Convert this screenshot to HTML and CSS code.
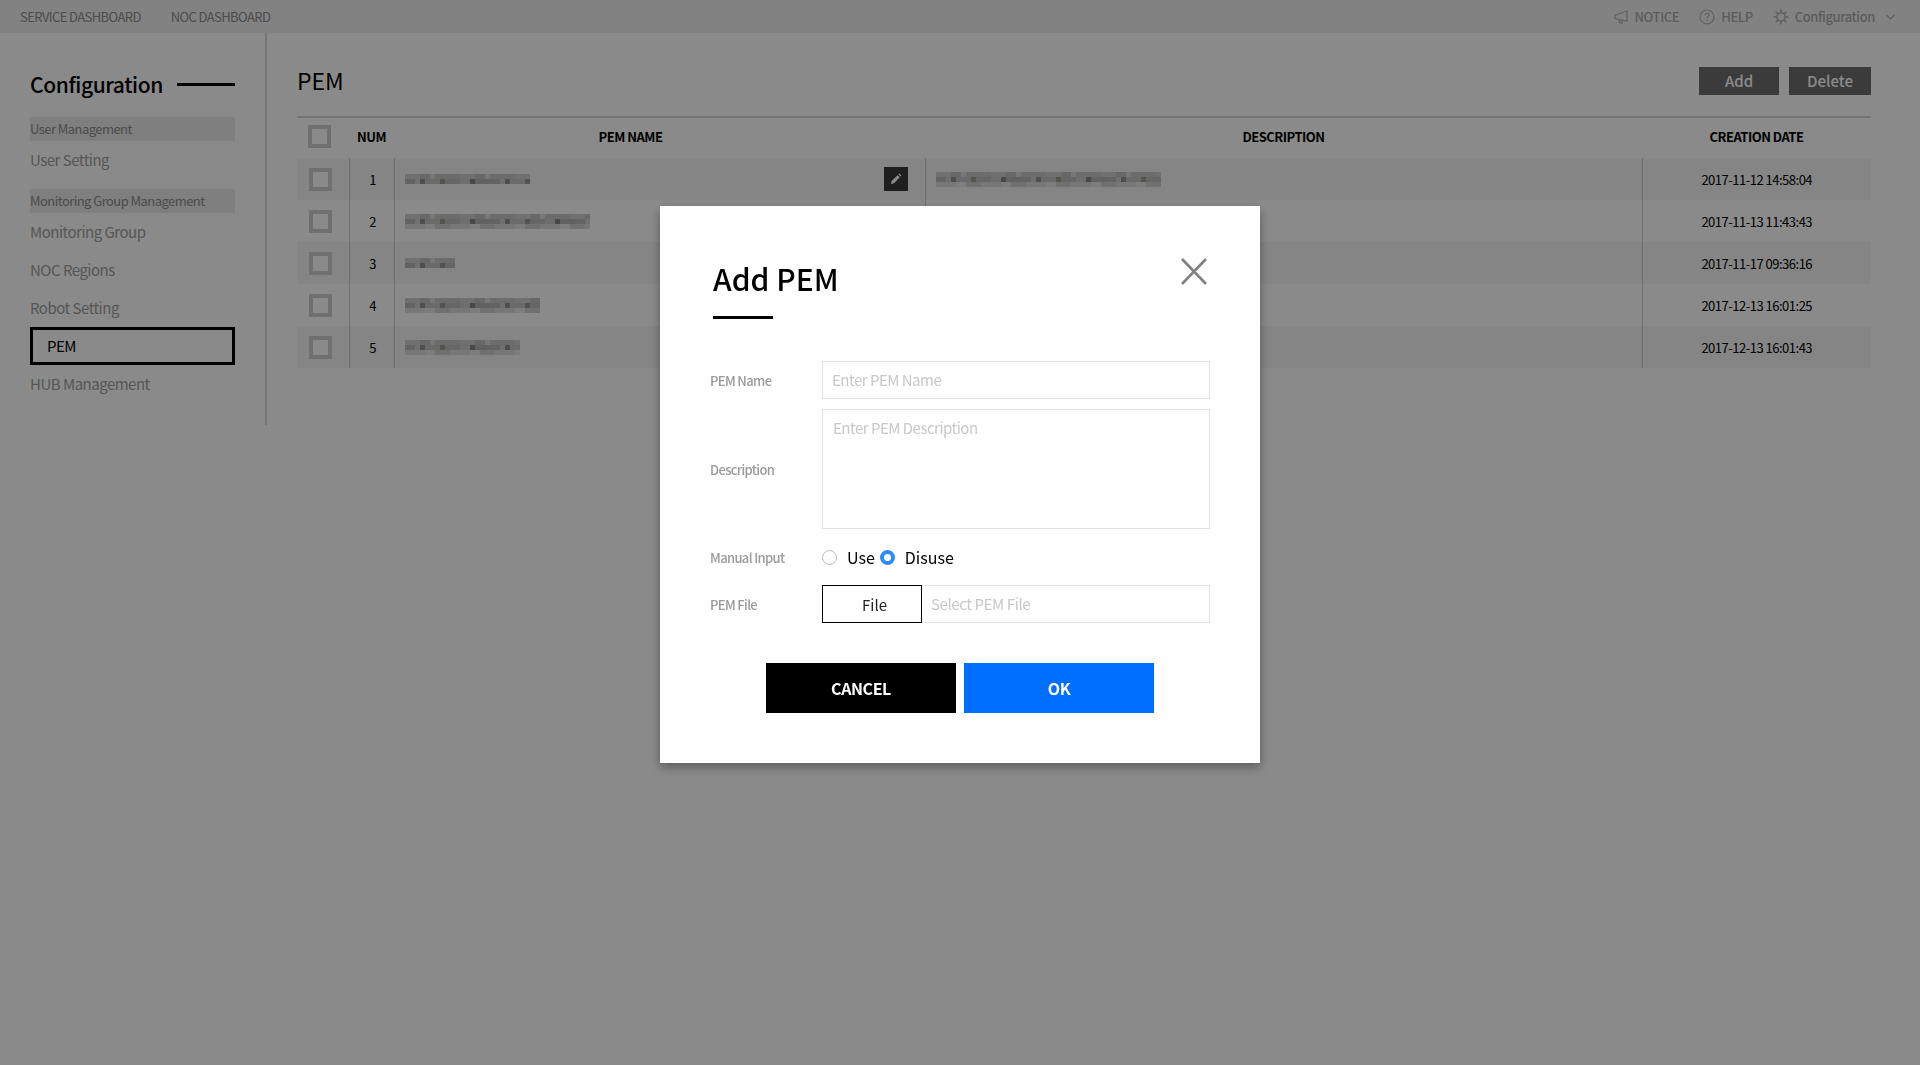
FILE: index.html
```html
<!DOCTYPE html>
<html lang="en">
<head>
    <meta charset="UTF-8">
    <title>PEM</title>
    <link rel="stylesheet" href="styles.css">
</head>
<body>
<div id="topbar">
    <div class="top-left">
        <a>SERVICE DASHBOARD</a>
        <a>NOC DASHBOARD</a>
    </div>
    <div class="top-right">
        <a class="notice">
            <svg width="14" height="14" viewBox="0 0 14 14" fill="none" stroke="#b0b0b0" stroke-width="1.2"><path d="M13 1 L13 11 L5 9.5 L1 8.5 L1 5.5 L5 3.8 Z M5 9.5 L5.6 13 L8.2 13 L7.8 10"/></svg>
            NOTICE
        </a>
        <a class="help">
            <svg width="16" height="16" viewBox="0 0 16 16" fill="none" stroke="#b0b0b0" stroke-width="1.1"><circle cx="8" cy="8" r="7"/><path d="M5.9 6.2 C6 4.8 7 4.2 8 4.2 C9.3 4.2 10.1 5 10.1 6 C10.1 7.4 8 7.5 8 9.4"/><path d="M8 10.6 L8 12"/></svg>
            HELP
        </a>
        <a class="conf">
            <svg width="16" height="16" viewBox="0 0 16 16" fill="none" stroke="#b0b0b0" stroke-width="1.5"><circle cx="8" cy="8" r="4.2"/><path d="M8 .5V4M8 12v3.5M.5 8H4M12 8h3.5M2.7 2.7l2.5 2.5M10.8 10.8l2.5 2.5M13.3 2.7l-2.5 2.5M5.2 10.8l-2.5 2.5"/></svg>
            Configuration
            <svg class="chev" width="9" height="6" viewBox="0 0 9 6" fill="none" stroke="#b0b0b0" stroke-width="1.2"><path d="M.5 1 L4.5 5 L8.5 1"/></svg>
        </a>
    </div>
</div>
<div id="wrap">
    <div id="side">
        <div class="side-title"><h2>Configuration</h2><i></i></div>
        <div class="side-group">User Management</div>
        <a class="side-item">User Setting</a>
        <div class="side-group second">Monitoring Group Management</div>
        <a class="side-item">Monitoring Group</a>
        <a class="side-item">NOC Regions</a>
        <a class="side-item">Robot Setting</a>
        <a class="side-item on">PEM</a>
        <a class="side-item">HUB Management</a>
    </div>
    <div id="main">
        <div class="main-head">
            <h1>PEM</h1>
            <div class="btns">
                <button class="btn-add">Add</button>
                <button class="btn-del">Delete</button>
            </div>
        </div>
        <table>
            <colgroup>
                <col class="c-check"><col class="c-num"><col class="c-name"><col class="c-desc"><col class="c-date">
            </colgroup>
            <thead>
                <tr>
                    <th><span class="check head"></span></th>
                    <th>NUM</th>
                    <th class="th-name">PEM NAME</th>
                    <th>DESCRIPTION</th>
                    <th>CREATION DATE</th>
                </tr>
            </thead>
            <tbody>
                <tr>
                    <td><span class="check"></span></td>
                    <td>1</td>
                    <td><div class="name-cell"><span class="mosaic m1"></span><span class="edit"><svg width="12" height="12" viewBox="0 0 12 12" fill="#fff"><path d="M1 11 L1.6 8 L7.6 2.2 L9.8 4.3 L4 10.2 Z M8.4 1.4 L9.4 .5 L11.5 2.6 L10.6 3.5 Z"/></svg></span></div></td>
                    <td><span class="mosaic d1"></span></td>
                    <td class="date">2017-11-12 14:58:04</td>
                </tr>
                <tr>
                    <td><span class="check"></span></td>
                    <td>2</td>
                    <td><span class="mosaic m2"></span></td>
                    <td></td>
                    <td class="date">2017-11-13 11:43:43</td>
                </tr>
                <tr>
                    <td><span class="check"></span></td>
                    <td>3</td>
                    <td><span class="mosaic m3"></span></td>
                    <td></td>
                    <td class="date">2017-11-17 09:36:16</td>
                </tr>
                <tr>
                    <td><span class="check"></span></td>
                    <td>4</td>
                    <td><span class="mosaic m4"></span></td>
                    <td></td>
                    <td class="date">2017-12-13 16:01:25</td>
                </tr>
                <tr>
                    <td><span class="check"></span></td>
                    <td>5</td>
                    <td><span class="mosaic m5"></span></td>
                    <td></td>
                    <td class="date">2017-12-13 16:01:43</td>
                </tr>
            </tbody>
        </table>
    </div>
</div>

<div id="overlay">
    <div id="modal">
        <a class="close">
            <svg width="26" height="27" viewBox="0 0 26 27" fill="none" stroke="#808080" stroke-width="2.6"><path d="M1 1 L25 26 M25 1 L1 26"/></svg>
        </a>
        <h3>Add PEM</h3>
        <div class="title-line"></div>
        <div class="form">
            <label>PEM Name</label>
            <input type="text" placeholder="Enter PEM Name">
            <label>Description</label>
            <textarea placeholder="Enter PEM Description"></textarea>
            <label>Manual Input</label>
            <div class="radios">
                <input type="radio" name="manual" id="use"><label for="use">Use</label>
                <input type="radio" name="manual" id="disuse" checked><label for="disuse">Disuse</label>
            </div>
            <label>PEM File</label>
            <div class="file-row">
                <button class="file-btn">File</button>
                <input type="text" placeholder="Select PEM File">
            </div>
        </div>
        <div class="actions">
            <button class="cancel">CANCEL</button>
            <button class="ok">OK</button>
        </div>
    </div>
</div>
</body>
</html>
```

FILE: styles.css
```css
*{
    margin:0;
    padding:0;
    box-sizing:border-box;
}
html,body{
    height:100%;
}
body{
    background:#fff;
    font-family:"Noto Sans CJK KR","Noto Sans",sans-serif;
    color:#000;
    overflow:hidden;
}
button,input,textarea{
    font-family:inherit;
}
#topbar{
    height:33px;
    background:#f1f1f1;
    display:flex;
    justify-content:space-between;
    align-items:center;
    padding:0 25px 0 20px;
    font-size:13px;
    letter-spacing:-.6px;
    color:#8c8c8c;
}
.top-left{
    display:flex;
    gap:30px;
}
.top-right{
    display:flex;
    align-items:center;
    color:#a8a8a8;
    letter-spacing:-.4px;
}
.top-right a{
    display:flex;
    align-items:center;
    gap:6px;
    font-weight:500;
}
.help{
    margin-left:20px;
}
.conf{
    margin-left:20px;
}
.chev{
    margin-left:5px;
}
#wrap{
    display:flex;
}
#side{
    width:268px;
    height:392px;
    padding:0 30px 0 30px;
    border-right:2px solid #d9d9d9;
}
.side-title{
    display:flex;
    align-items:center;
    justify-content:space-between;
    height:34px;
    margin-top:34px;
    margin-bottom:16px;
}
.side-title h2{
    font-size:21px;
    font-weight:500;
    letter-spacing:-.4px;
}
.side-title i{
    display:block;
    width:58px;
    height:3px;
    background:#000;
}
.side-group{
    height:24px;
    line-height:23px;
    background:#eaeaea;
    font-size:13px;
    letter-spacing:-.55px;
    color:#8c8c8c;
}
.side-group.second{
    margin-top:10px;
}
.side-item{
    display:block;
    height:38px;
    line-height:38px;
    font-size:15px;
    letter-spacing:-.5px;
    color:#a0a0a0;
}
.side-item.on{
    border:3px solid #000;
    padding-left:14px;
    line-height:32px;
    color:#000;
}
#main{
    flex:1;
    padding:0 49px 0 30px;
}
.main-head{
    display:flex;
    justify-content:space-between;
    height:85px;
    border-bottom:2px solid #d9d9d9;
}
.main-head h1{
    font-size:23px;
    font-weight:400;
    line-height:32px;
    margin-top:31px;
}
.btns{
    display:flex;
    gap:10px;
    margin-top:34px;
}
.btns button{
    height:28px;
    border:0;
    background:#6f6e6e;
    color:#fff;
    font-size:15px;
    font-weight:500;
    padding-bottom:1px;
}
.btn-add{
    width:80px;
}
.btn-del{
    width:82px;
}
table{
    width:1574px;
    border-collapse:collapse;
    table-layout:fixed;
}
.c-check{
    width:52px;
}
.c-num{
    width:45px;
}
.c-name{
    width:531px;
}
.c-desc{
    width:717px;
}
.c-date{
    width:229px;
}
th{
    height:40px;
    padding-bottom:3px;
    font-size:13px;
    font-weight:700;
    letter-spacing:-.5px;
}
th.th-name{
    padding-right:58px;
}
td{
    height:42px;
    font-size:13px;
    text-align:center;
    letter-spacing:-.5px;
    border-left:1px solid #d0d0d0;
}
td:first-child{
    border-left:0;
}
td:nth-child(2){
    padding-left:2px;
}
td:nth-child(3),td:nth-child(4){
    text-align:left;
    padding-left:10px;
}
td:nth-child(3){
    padding-right:17px;
}
tbody tr:nth-child(odd){
    background:#f5f5f5;
}
.date{
    color:#000;
}
.check{
    display:block;
    width:23px;
    height:23px;
    margin-left:12px;
    border:4px solid #cfcfcf;
    background:#fff;
}
.check.head{
    margin-left:11px;
}
.name-cell{
    display:flex;
    justify-content:space-between;
    align-items:center;
}
.edit{
    display:flex;
    align-items:center;
    justify-content:center;
    width:24px;
    height:24px;
    background:#383838;
}
/* names are blurred out in the source shot */
.mosaic{
    display:block;
    height:15px;
    background-color:#dcdcdc;
    background-image:
        repeating-linear-gradient(90deg,#b8b8b8 0 10px,#d0d0d0 10px 15px,#8e9096 15px 20px,#c4c4c4 20px 35px,#a09890 35px 40px,#bcbcbc 40px 55px,#cccccc 55px 65px,#84848c 65px 70px,#b4b4b4 70px 85px),
        repeating-linear-gradient(90deg,#d0d0d0 0 15px,#c0c0c0 15px 25px,#dcdcdc 25px 30px,#c8c8c8 30px 55px),
        repeating-linear-gradient(90deg,#dcdcdc 0 20px,#e8e8e8 20px 30px,#d0d0d0 30px 45px);
    background-size:100% 5px;
    background-position:0 5px,0 0,0 10px;
    background-repeat:no-repeat;
}
.m1{
    width:125px;
    height:10px;
}
.m2{
    width:185px;
}
.m3{
    width:50px;
    height:10px;
}
.m4{
    width:135px;
}
.m5{
    width:115px;
}
.d1{
    width:225px;
}
#overlay{
    position:fixed;
    top:0;
    left:0;
    right:0;
    bottom:0;
    background:rgba(0,0,0,.46);
    display:flex;
    justify-content:center;
    align-items:flex-start;
    padding-top:206px;
}
#modal{
    position:relative;
    width:600px;
    height:557px;
    background:#fff;
    padding:50px 50px 0;
    box-shadow:0 4px 10px rgba(0,0,0,.35);
}
.close{
    position:absolute;
    top:52px;
    right:53px;
    display:block;
    width:26px;
    height:27px;
}
#modal h3{
    margin-left:3px;
    font-size:30px;
    font-weight:500;
    line-height:44px;
}
.title-line{
    width:60px;
    height:3px;
    margin:16px 0 42px 3px;
    background:#000;
}
.form{
    display:grid;
    grid-template-columns:112px 388px;
    row-gap:10px;
    align-items:center;
}
.form > label{
    font-size:13px;
    letter-spacing:-.65px;
    color:#9a9a9a;
    font-weight:500;
}
.form input[type=text],.form textarea{
    border:1px solid #e2e2e2;
    height:38px;
    padding:0 9px 2px;
    font-size:15px;
    letter-spacing:-.5px;
    outline:0;
}
.form textarea{
    height:120px;
    padding:7px 10px;
    resize:none;
    display:block;
}
::placeholder{
    color:#c8c8c8;
    opacity:1;
}
.radios{
    display:flex;
    align-items:center;
    height:36px;
    font-size:16px;
}
.radios input{
    appearance:none;
    width:15px;
    height:15px;
    border:1px solid #bbb;
    border-radius:50%;
    background:#fff;
    margin-right:10px;
}
.radios input:checked{
    border:4px solid #2b8cff;
}
.radios label + input{
    margin-left:5px;
}
.file-row{
    display:flex;
}
.file-row input[type=text]{
    flex:1;
    border-left:0;
    letter-spacing:-.4px;
}
.file-btn{
    width:100px;
    height:38px;
    border:1px solid #000;
    background:#fff;
    font-size:15px;
    color:#222;
    padding-left:5px;
}
.actions{
    display:flex;
    justify-content:center;
    gap:8px;
    margin-top:40px;
}
.actions button{
    width:190px;
    height:50px;
    border:0;
    color:#fff;
    font-size:16px;
    font-weight:700;
    letter-spacing:-.4px;
}
.cancel{
    background:#000;
}
.ok{
    background:#006eff;
}
```
